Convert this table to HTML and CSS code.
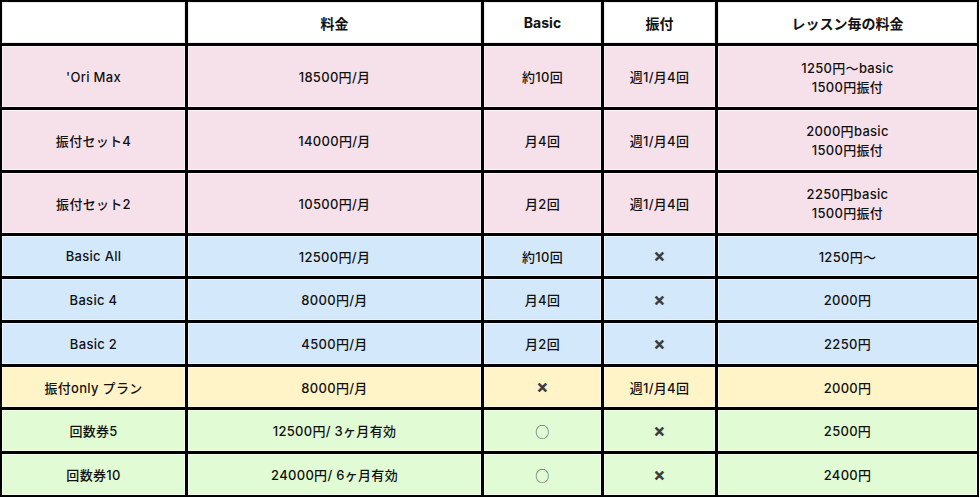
FILE: index.html
```html
<!DOCTYPE html>
<html lang="ja">
<head>
<meta charset="utf-8">
<title>料金表</title>
<link rel="stylesheet" href="styles.css">
</head>
<body>
<div class="table">
  <div class="cell head"></div>
  <div class="cell head">料金</div>
  <div class="cell head">Basic</div>
  <div class="cell head">振付</div>
  <div class="cell head">レッスン毎の料金</div>

  <div class="cell pink">'Ori Max</div>
  <div class="cell pink">18500円/月</div>
  <div class="cell pink">約10回</div>
  <div class="cell pink">週1/月4回</div>
  <div class="cell pink two">1250円～basic<br>1500円振付</div>

  <div class="cell pink">振付セット4</div>
  <div class="cell pink">14000円/月</div>
  <div class="cell pink">月4回</div>
  <div class="cell pink">週1/月4回</div>
  <div class="cell pink two">2000円basic<br>1500円振付</div>

  <div class="cell pink">振付セット2</div>
  <div class="cell pink">10500円/月</div>
  <div class="cell pink">月2回</div>
  <div class="cell pink">週1/月4回</div>
  <div class="cell pink two">2250円basic<br>1500円振付</div>

  <div class="cell blue">Basic All</div>
  <div class="cell blue">12500円/月</div>
  <div class="cell blue">約10回</div>
  <div class="cell blue"><span class="x">×</span></div>
  <div class="cell blue">1250円～</div>

  <div class="cell blue">Basic 4</div>
  <div class="cell blue">8000円/月</div>
  <div class="cell blue">月4回</div>
  <div class="cell blue"><span class="x">×</span></div>
  <div class="cell blue">2000円</div>

  <div class="cell blue">Basic 2</div>
  <div class="cell blue">4500円/月</div>
  <div class="cell blue">月2回</div>
  <div class="cell blue"><span class="x">×</span></div>
  <div class="cell blue">2250円</div>

  <div class="cell yellow">振付only プラン</div>
  <div class="cell yellow">8000円/月</div>
  <div class="cell yellow"><span class="x">×</span></div>
  <div class="cell yellow">週1/月4回</div>
  <div class="cell yellow">2000円</div>

  <div class="cell green">回数券5</div>
  <div class="cell green">12500円/ 3ヶ月有効</div>
  <div class="cell green"><span class="o">○</span></div>
  <div class="cell green"><span class="x">×</span></div>
  <div class="cell green">2500円</div>

  <div class="cell green">回数券10</div>
  <div class="cell green">24000円/ 6ヶ月有効</div>
  <div class="cell green"><span class="o">○</span></div>
  <div class="cell green"><span class="x">×</span></div>
  <div class="cell green">2400円</div>
</div>
</body>
</html>
```
FILE: styles.css
```css
html, body {
  margin: 0;
  padding: 0;
  background: #ffffff;
}

.table {
  display: grid;
  width: 979px;
  box-sizing: border-box;
  padding: 2px;
  gap: 3px;
  background: #000000;
  grid-template-columns: 183px 293px 117px 111px 259px;
  grid-template-rows: 41px 61px 60px 60px 40px 41px 41px 40px 41px 41px;
  font-family: "Inter", "Noto Sans CJK JP", sans-serif;
  font-size: 13px;
  font-weight: 500;
  letter-spacing: 0.3px;
  color: #111111;
}

.cell {
  display: flex;
  align-items: center;
  justify-content: center;
  text-align: center;
  box-shadow: inset 0 0 0 1px rgba(255, 255, 255, 0.5);
}

.head {
  background: #ffffff;
  font-size: 14px;
  font-weight: 700;
  letter-spacing: 0;
  box-shadow: inset 0 0 0 1px #ececec;
}

.pink { background: #f6e1ea; }
.blue { background: #d3e9fb; }
.yellow { background: #fff3c8; }
.green { background: #e1fbd5; }

.two {
  line-height: 19px;
  padding-top: 2px;
}

.x {
  font-family: "DejaVu Sans", sans-serif;
  font-weight: 700;
  font-size: 14px;
  color: #3a3a3a;
  -webkit-text-stroke: 0.7px #3a3a3a;
}

.o {
  font-family: "Noto Sans CJK JP", sans-serif;
  font-weight: 300;
  font-size: 14px;
  color: #333333;
}
```
